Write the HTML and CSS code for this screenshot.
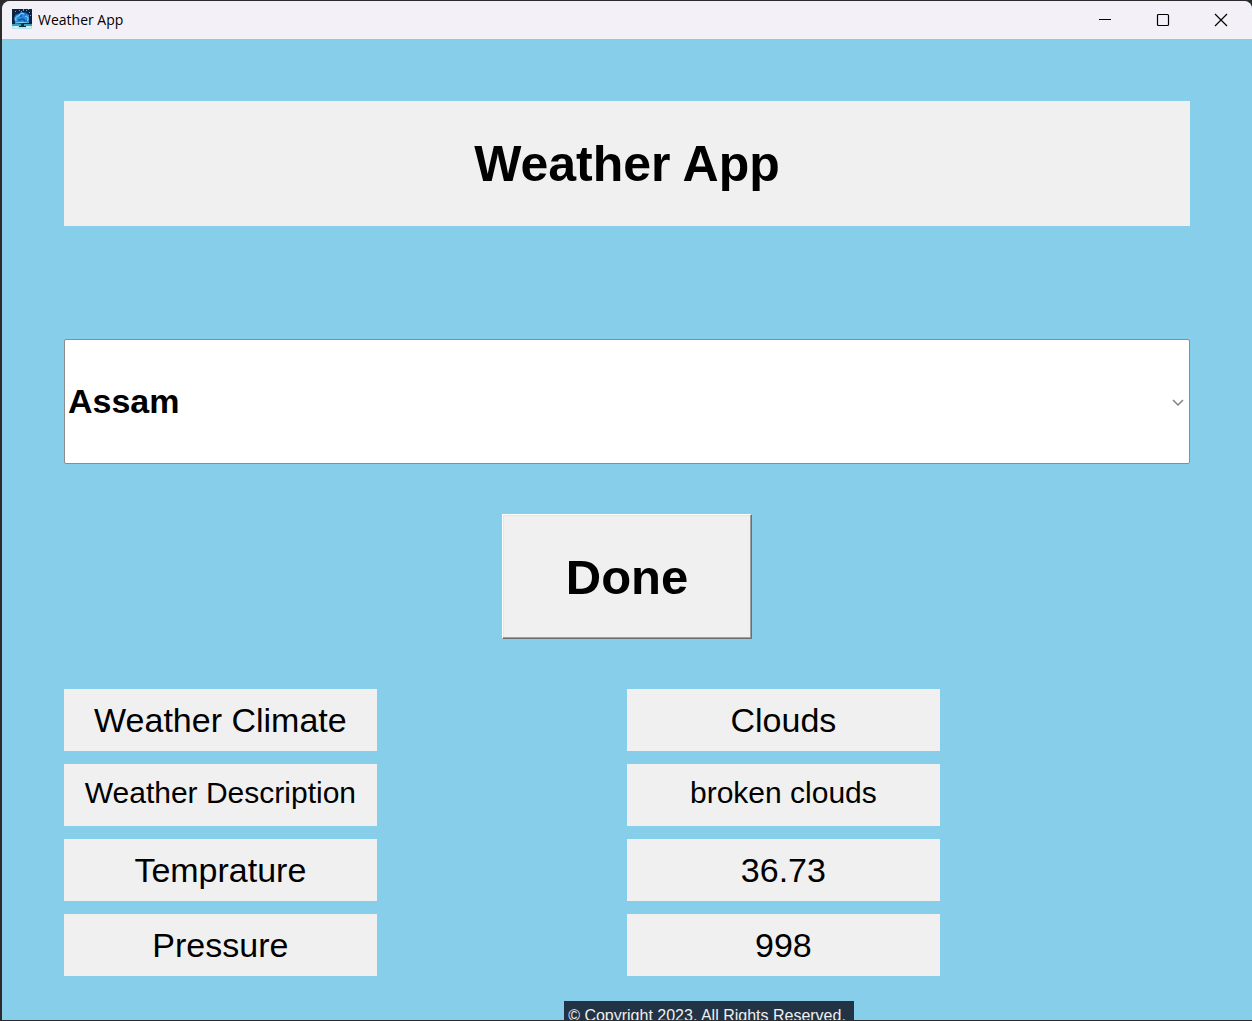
FILE: index.html
```html
<!DOCTYPE html>
<html lang="en">
<head>
<meta charset="utf-8">
<title>Weather App</title>
<link rel="stylesheet" href="styles.css">
</head>
<body>
<div class="window">
  <header class="titlebar">
    <svg class="app-icon" viewBox="0 0 20 20" aria-hidden="true">
      <rect width="20" height="20" fill="#0c2440"/>
      <path d="M0 16h20v4H0z" fill="#b4e4ee"/>
      <path d="M0 15h20v2H0z" fill="#3f9fbe"/>
      <path d="M3 5l11-2 3 3v8l-12 1-2-2z" fill="#123f86"/>
      <path d="M3 13l-1-4 2-3 3-1 2-2 4 1 4 2v6l-12 2z" fill="#2c8be0"/>
      <path d="M4 12c-1-4 1-5 3-5 1-4 6-3 6 0 3 0 4 3 2 5" fill="none" stroke="#8fe8ff"/>
      <path d="M6 11h3v-1h3v2h3M8 7h2M12 6h2" fill="none" stroke="#0d3c92"/>
      <path d="M3 14l14-1" stroke="#7ee4f5"/>
      <path d="M9 15h3v2h2v1H7v-1h2z" fill="#0c2b45"/>
      <path d="M7 1h1v1H7zM11 0h1v2h-1zM14 1h1v1h-1zM17 3h1v1h-1zM3 2h1v1H3zM16 0h1v1h-1zM9 2h1v1H9zM18 6h1v1h-1z" fill="#4fb7d2"/>
      <path d="M1 18h5M14 18h5" stroke="#e4fbff"/>
    </svg>
    <span class="window-title">Weather App</span>
    <div class="window-controls">
      <button class="control" type="button" aria-label="Minimize">
        <svg viewBox="0 0 14 14"><path d="M1 6.500h12"/></svg>
      </button>
      <button class="control" type="button" aria-label="Maximize">
        <svg viewBox="0 0 14 14"><rect x="1.500" y="1.500" width="11" height="11" rx="1"/></svg>
      </button>
      <button class="control" type="button" aria-label="Close">
        <svg viewBox="0 0 14 14"><path d="M1 1l12 12M13 1L1 13"/></svg>
      </button>
    </div>
  </header>
  <main class="content">
    <h1 class="heading">Weather App</h1>
    <form class="search">
      <div class="state-field">
        <select class="state" aria-label="State">
          <option selected>Assam</option>
        </select>
        <svg class="chevron" viewBox="0 0 12 8" aria-hidden="true"><path d="M1 1l5 5 5-5"/></svg>
      </div>
      <button class="done" type="button">Done</button>
    </form>
    <dl class="results">
      <dt class="cell label">Weather Climate</dt>
      <dd class="cell value">Clouds</dd>
      <dt class="cell label small">Weather Description</dt>
      <dd class="cell value small">broken clouds</dd>
      <dt class="cell label">Temprature</dt>
      <dd class="cell value">36.73</dd>
      <dt class="cell label">Pressure</dt>
      <dd class="cell value">998</dd>
    </dl>
    <footer class="copyright">© Copyright 2023. All Rights Reserved.</footer>
  </main>
</div>
</body>
</html>
```
FILE: styles.css
```css
* {
  box-sizing: border-box;
}

body {
  margin: 0;
  height: 100vh;
  padding: 1px 0 1px 2px;
  overflow: hidden;
  background: #2b2b2d;
  font-family: "Liberation Sans", Arial, sans-serif;
  color: #000;
}

.window {
  display: flex;
  flex-direction: column;
  height: 100%;
  overflow: hidden;
  border-radius: 8px 8px 0 0;
  background: #87ceeb;
}

.titlebar {
  display: flex;
  align-items: center;
  flex: none;
  height: 38px;
  padding: 0 2px 0 10px;
  background: #f4f0f8;
}

.app-icon {
  width: 20px;
  height: 20px;
  margin: -2px 6px 0 0;
}

.window-title {
  font: 14px/20px "Open Sans", "Noto Sans", sans-serif;
}

.window-controls {
  display: flex;
  height: 100%;
  margin-left: auto;
}

.control {
  display: flex;
  align-items: center;
  justify-content: center;
  width: 58px;
  padding: 0;
  border: 0;
  background: transparent;
}

.control svg {
  width: 14px;
  height: 14px;
  fill: none;
  stroke: #000;
  stroke-width: 1.2;
}

.content {
  display: flex;
  flex-direction: column;
  padding: 62px 62px 0;
}

.heading {
  margin: 0;
  padding: 35px 0 34px;
  background: #f0f0f0;
  font-size: 50px;
  line-height: 56px;
  text-align: center;
}

.search {
  display: flex;
  flex-direction: column;
  align-items: center;
  gap: 50px;
  margin-top: 113px;
}

.state-field {
  position: relative;
  width: 100%;
}

.state {
  display: block;
  width: 100%;
  height: 125px;
  padding: 0 32px 2px 3px;
  appearance: none;
  border: 1px solid #8c8c8c;
  border-radius: 2px;
  background: #fff;
  color: #000;
  font: bold 34px/40px "Liberation Sans", Arial, sans-serif;
}

.chevron {
  position: absolute;
  top: 60px;
  right: 6px;
  width: 12px;
  height: 8px;
  fill: none;
  stroke: #808080;
  stroke-width: 1.5;
  pointer-events: none;
}

.done {
  width: 250px;
  height: 125px;
  padding: 0;
  border: 1px solid;
  border-color: #fff #6e6e6e #6e6e6e #fff;
  background: #f0f0f0;
  box-shadow: inset -1px -1px #a0a0a0, inset 1px 1px #e6e6e6;
  color: #000;
  font: bold 49px/56px "Liberation Sans", Arial, sans-serif;
}

.results {
  display: grid;
  grid-template-columns: 25fr 20fr 25fr 20fr;
  row-gap: 13px;
  margin: 50px 0 0;
}

.cell {
  display: flex;
  align-items: center;
  justify-content: center;
  height: 62px;
  margin: 0;
  background: #f0f0f0;
  font-size: 34px;
  line-height: 40px;
  white-space: nowrap;
}

.label {
  grid-column: 1;
}

.value {
  grid-column: 3;
}

.small {
  padding-bottom: 4px;
  font-size: 30px;
}

.copyright {
  align-self: center;
  margin: 25px 0 0 164px;
  padding: 5px 8px 5px 4px;
  background: #213345;
  color: #f0f0f0;
  font-size: 16px;
  line-height: 20px;
  white-space: nowrap;
}
```
